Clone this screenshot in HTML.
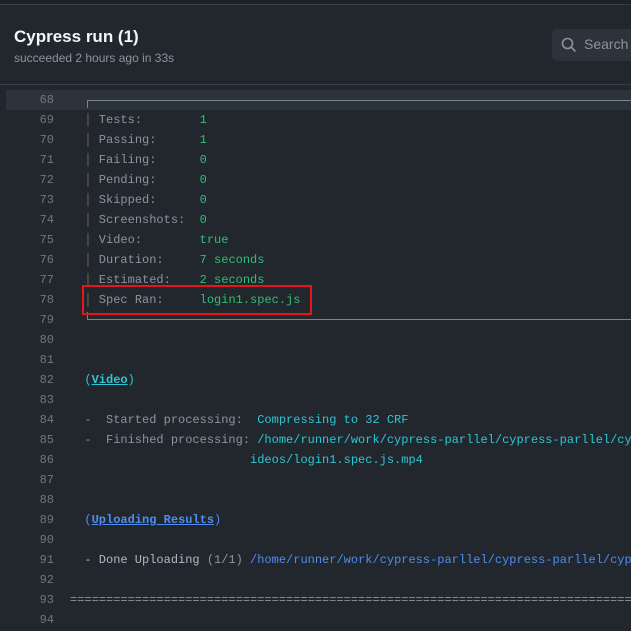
<!DOCTYPE html>
<html style="overflow:hidden"><head><meta charset="utf-8"><style>
*{margin:0;padding:0;box-sizing:border-box}
body{width:631px;height:631px;overflow:hidden;background:#22272e;font-family:"Liberation Sans",sans-serif;position:relative}
.top{position:absolute;left:0;top:0;width:631px;height:5px;background:#1c2128;border-bottom:1px solid #373e47}
.hdr{position:absolute;left:0;top:5px;width:631px;height:80px;border-bottom:1px solid #373e47}
h1{position:absolute;left:14px;top:22px;font-size:17px;font-weight:bold;color:#f0f6fc}
.sub{position:absolute;left:14px;top:46px;font-size:12px;color:#8b949e}
.search{position:absolute;left:552px;top:29px;width:79px;height:32px;background:#2d333b;border-radius:6px 0 0 6px;color:#8b949e;font-size:14px;overflow:hidden}
.search span{position:absolute;left:32px;top:7px}
.row{position:absolute;left:0;width:631px;height:20px;font-family:"Liberation Mono",monospace;font-size:12px;line-height:20px;white-space:pre;overflow:hidden}
.ln{position:absolute;left:0;width:54px;text-align:right;color:#6e7681}
.c{position:absolute;left:70px;color:#adbac7}
.hl{background:#2d333b;left:6px;width:625px}
.hl .ln{left:-6px}
.d{color:#8b949e}.g{color:#2fbf71}.cy{color:#2fc5d3}.b{color:#4d8df0}.u{text-decoration:underline;font-weight:bold}
.p{color:#7d6c55}
</style></head><body>
<div class="top"></div>
<div class="hdr">
<h1>Cypress run (1)</h1>
<div class="sub">succeeded 2 hours ago in 33s</div>
</div>
<div class="search"><svg style="position:absolute;left:9px;top:8px" width="16" height="16" viewBox="0 0 16 16"><circle cx="6.5" cy="6.5" r="5" fill="none" stroke="#8b949e" stroke-width="1.6"/><path d="M10.2 10.2L14 14" stroke="#8b949e" stroke-width="1.6" stroke-linecap="round"/></svg><span>Search</span></div>

<div class="row hl" style="top:90px"><span class="ln">68</span></div>
<div style="position:absolute;left:87px;top:100px;width:544px;height:8px;border-top:1px solid #768390;border-left:1px solid #768390"></div>
<div style="position:absolute;left:87px;top:312px;width:544px;height:8px;border-bottom:1px solid #768390;border-left:1px solid #768390"></div>

<div class="row" style="top:110px"><span class="ln">69</span><span class="c">  <span class="p">│</span><span class="d"> Tests:        </span><span class="g">1</span></span></div>
<div class="row" style="top:130px"><span class="ln">70</span><span class="c">  <span class="p">│</span><span class="d"> Passing:      </span><span class="g">1</span></span></div>
<div class="row" style="top:150px"><span class="ln">71</span><span class="c">  <span class="p">│</span><span class="d"> Failing:      </span><span class="g">0</span></span></div>
<div class="row" style="top:170px"><span class="ln">72</span><span class="c">  <span class="p">│</span><span class="d"> Pending:      </span><span class="g">0</span></span></div>
<div class="row" style="top:190px"><span class="ln">73</span><span class="c">  <span class="p">│</span><span class="d"> Skipped:      </span><span class="g">0</span></span></div>
<div class="row" style="top:210px"><span class="ln">74</span><span class="c">  <span class="p">│</span><span class="d"> Screenshots:  </span><span class="g">0</span></span></div>
<div class="row" style="top:230px"><span class="ln">75</span><span class="c">  <span class="p">│</span><span class="d"> Video:        </span><span class="g">true</span></span></div>
<div class="row" style="top:250px"><span class="ln">76</span><span class="c">  <span class="p">│</span><span class="d"> Duration:     </span><span class="g">7 seconds</span></span></div>
<div class="row" style="top:270px"><span class="ln">77</span><span class="c">  <span class="p">│</span><span class="d"> Estimated:    </span><span class="g">2 seconds</span></span></div>
<div class="row" style="top:290px"><span class="ln">78</span><span class="c">  <span class="p">│</span><span class="d"> Spec Ran:     </span><span class="g">login1.spec.js</span></span></div>
<div style="position:absolute;left:82px;top:285px;width:230px;height:30px;border:2px solid #e8141b"></div>
<div class="row" style="top:310px"><span class="ln">79</span></div>
<div class="row" style="top:330px"><span class="ln">80</span></div>
<div class="row" style="top:350px"><span class="ln">81</span></div>
<div class="row" style="top:370px"><span class="ln">82</span><span class="c">  <span class="cy">(<span class="u">Video</span>)</span></span></div>
<div class="row" style="top:390px"><span class="ln">83</span></div>
<div class="row" style="top:410px"><span class="ln">84</span><span class="c"><span class="d">  -  Started processing:  </span><span class="cy">Compressing to 32 CRF</span></span></div>
<div class="row" style="top:430px"><span class="ln">85</span><span class="c"><span class="d">  -  Finished processing: </span><span class="cy">/home/runner/work/cypress-parllel/cypress-parllel/cypress/v</span></span></div>
<div class="row" style="top:450px"><span class="ln">86</span><span class="c">                         <span class="cy">ideos/login1.spec.js.mp4</span></span></div>
<div class="row" style="top:470px"><span class="ln">87</span></div>
<div class="row" style="top:490px"><span class="ln">88</span></div>
<div class="row" style="top:510px"><span class="ln">89</span><span class="c">  <span class="b">(<span class="u">Uploading Results</span>)</span></span></div>
<div class="row" style="top:530px"><span class="ln">90</span></div>
<div class="row" style="top:550px"><span class="ln">91</span><span class="c">  - Done Uploading <span class="d">(1/1)</span> <span class="b">/home/runner/work/cypress-parllel/cypress-parllel/cypress</span></span></div>
<div class="row" style="top:570px"><span class="ln">92</span></div>
<div class="row" style="top:590px"><span class="ln">93</span><span class="c" style="color:#8b949e">================================================================================</span></div>
<div class="row" style="top:610px"><span class="ln">94</span></div>
</body></html>
